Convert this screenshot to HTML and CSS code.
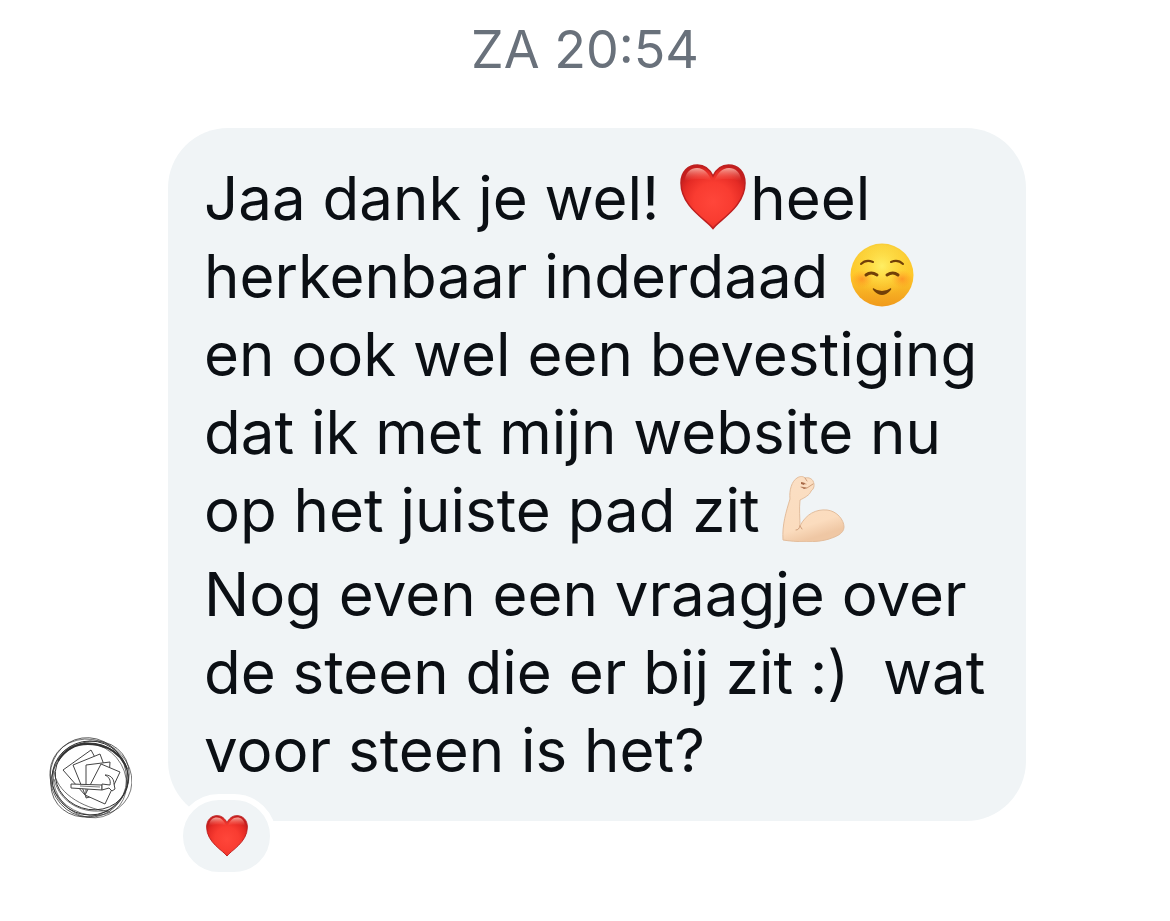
FILE: index.html
```
<!DOCTYPE html>
<html lang="nl">
<head>
    <meta charset="UTF-8">
    <meta name="viewport" content="width=device-width, initial-scale=1.0">
    <title>Chat</title>
    <link rel="stylesheet" href="styles.css">
</head>
<body>
    <svg class="defs" width="0" height="0" aria-hidden="true">
        <defs>
            <radialGradient id="heartFill" cx="0.5" cy="0.58" r="0.6">
                <stop offset="0" stop-color="#ff463a"/>
                <stop offset="0.5" stop-color="#f93c31"/>
                <stop offset="0.8" stop-color="#e52b25"/>
                <stop offset="1" stop-color="#c51d1d"/>
            </radialGradient>
            <linearGradient id="heartShine" x1="0" y1="0" x2="0" y2="1">
                <stop offset="0" stop-color="#ffc1b4" stop-opacity="0.85"/>
                <stop offset="1" stop-color="#ff6a5c" stop-opacity="0"/>
            </linearGradient>
            <linearGradient id="faceFill" x1="0" y1="0" x2="0" y2="1">
                <stop offset="0" stop-color="#f9cf3a"/>
                <stop offset="0.5" stop-color="#ffc82a"/>
                <stop offset="1" stop-color="#f09a1c"/>
            </linearGradient>
            <radialGradient id="faceLight" cx="0.5" cy="0.35" r="0.5">
                <stop offset="0" stop-color="#fff36a" stop-opacity="0.9"/>
                <stop offset="1" stop-color="#ffdd3c" stop-opacity="0"/>
            </radialGradient>
            <radialGradient id="blush">
                <stop offset="0" stop-color="#ff6a1f" stop-opacity="0.5"/>
                <stop offset="1" stop-color="#ff8a20" stop-opacity="0"/>
            </radialGradient>
            <linearGradient id="skin" x1="0" y1="0" x2="0.3" y2="1">
                <stop offset="0" stop-color="#fbdfc4"/>
                <stop offset="0.8" stop-color="#fbdcbe"/>
                <stop offset="1" stop-color="#efc7a4"/>
            </linearGradient>
            <symbol id="heart" viewBox="0 0 66 66">
                <path fill="url(#heartFill)" stroke="#bd2020" stroke-width="1.5" d="M33 64.5C27 56 1 43 1 19C1 8 8 1 17.500 1C25 1 30 6 33 12C36 6 41 1 48.500 1C58 1 65 8 65 19C65 43 39 56 33 64.500Z"/>
                <path fill="url(#heartShine)" d="M5 17C5 8 11 4 17 4C24 4 28 9 32 17C24 14 13 15 5 17Z"/>
                <path fill="url(#heartShine)" d="M61 17C61 8 55 4 49 4C42 4 38 9 34 17C42 14 53 15 61 17Z"/>
            </symbol>
        </defs>
    </svg>

    <main class="chat">
        <time class="timestamp" datetime="20:54">ZA 20:54</time>

        <div class="message">
            <svg class="avatar" viewBox="0 0 84 84" role="img" aria-label="Avatar">
                <g fill="none" stroke="#333">
                    <ellipse cx="42" cy="41" rx="38" ry="37" stroke-width="1"/>
                    <ellipse cx="42" cy="40" rx="42" ry="37" stroke-width="0.600" transform="rotate(28 42 42)"/>
                    <ellipse cx="40" cy="43" rx="40" ry="38" stroke-width="0.700" transform="rotate(70 42 42)"/>
                    <ellipse cx="42" cy="42" rx="41" ry="36" stroke-width="0.700" transform="rotate(-38 42 42)"/>
                    <ellipse cx="43" cy="39" rx="37" ry="33" stroke-width="0.900" transform="rotate(18 42 42)"/>
                    <ellipse cx="43" cy="43" rx="39" ry="35" stroke-width="0.600" transform="rotate(50 42 42)"/>
                    <path stroke-width="2" d="M10 24C19 9 34 5 50 8C64 11 74 19 79 32"/>
                    <path stroke-width="0.700" d="M6 34C8 54 32 71 62 75M6 42C12 66 35 78 60 73"/>
                </g>
                <g fill="#fff" stroke="#444" stroke-width="1" stroke-linejoin="round">
                    <path d="M15 33L43 13L57 39L37 58Z"/>
                    <path d="M25 28L52 17L62 44L38 60Z"/>
                    <path d="M38 28L62 25L60 55L38 61Z"/>
                    <path d="M53 27L72 35L57 67L37 58Z"/>
                    <path d="M23 47L54 48V53L23 51Z"/>
                    <path d="M54 47L62 48C63 43 61 40 57 38C64 38 66 43 66 47L67 52L64 54L61 51L54 53Z"/>
                </g>
                <path d="M32 49L52 50" stroke="#777" stroke-width="1"/>
            </svg>

            <div class="bubble">
                <p>
                    Jaa dank je wel! <svg class="emoji" role="img" aria-label="hart"><use href="#heart"/></svg><span class="after-emoji">heel</span><br>
                    herkenbaar inderdaad
                    <svg class="emoji" viewBox="0 0 66 66" role="img" aria-label="blij gezicht">
                        <circle cx="33" cy="33" r="31.500" fill="url(#faceFill)"/>
                        <circle cx="33" cy="33" r="30" fill="url(#faceLight)"/>
                        <ellipse cx="13" cy="37" rx="11" ry="9" fill="url(#blush)"/>
                        <ellipse cx="53" cy="37" rx="11" ry="9" fill="url(#blush)"/>
                        <g fill="none" stroke="#724008" stroke-linecap="round">
                            <path stroke-width="2" d="M12 22Q17 17 24 20M42 20Q49 17 54 22"/>
                            <path stroke-width="3" d="M17 33Q22 29 28 33M38 33Q44 29 49 33"/>
                        </g>
                        <path fill="#724008" d="M24 46Q33 52 42 46Q43 47 41 49Q33 57 25 49Q23 47 24 46Z"/>
                    </svg><br>
                    en ook wel een bevestiging<br>
                    dat ik met mijn website nu<br>
                    op het juiste pad zit
                    <svg class="emoji" viewBox="0 0 66 66" role="img" aria-label="gespierde arm">
                        <path fill="url(#skin)" stroke="#e3bd9c" stroke-width="1" stroke-linejoin="round" d="M3 64C2 49 6 36 10 23C9 14 12 5 17 2C20 0 23 0 25 2C29 1 32 3 33 5C35 9 34 13 31 15C30 19 24 22 20 24C19 33 20 43 20 50C26 38 36 33 47 34C57 35 64 44 64 51C64 58 55 61 49 63C38 67 15 66 3 64Z"/>
                        <path fill="none" stroke="#cf9e7a" stroke-width="1" stroke-linecap="round" d="M20 50C19 53 18 54 16 54M20 50L22 53M21 11L27 12L33 8M22 7L26 8M25 2L27 5"/>
                        <path fill="#a76847" d="M21 6L25 7L24 9L21 8ZM21 11L27 12L24 13Z"/>
                    </svg>
                </p>
                <p>
                    Nog even een vraagje over<br>
                    de steen die er bij zit :)&nbsp; wat<br>
                    voor steen is het?
                </p>
                <button class="reaction" type="button" aria-label="Reactie: hart">
                    <svg class="reaction-heart" aria-hidden="true"><use href="#heart"/></svg>
                </button>
            </div>
        </div>
    </main>
</body>
</html>
```

FILE: styles.css
```
* {
    box-sizing: border-box;
}
body {
    margin: 0;
    background-color: #fff;
    color: #0b0f14;
    font-family: Inter, "Liberation Sans", sans-serif;
}
.defs {
    position: absolute;
}
.chat {
    display: flex;
    flex-direction: column;
    padding: 18px 144px 100px 48px;
}
.timestamp {
    align-self: center;
    /* centres the label on the window, not on the bubble column */
    margin-left: 96px;
    color: #69717b;
    font-size: 52px;
    line-height: 64px;
}
.message {
    display: flex;
    align-items: flex-end;
    gap: 36px;
    margin-top: 46px;
}
.avatar {
    flex: none;
    width: 84px;
    height: 84px;
}
.bubble {
    position: relative;
    flex: 1;
    padding: 31px 36px 32px;
    border-radius: 60px;
    background-color: #f0f4f6;
    font-size: 60px;
    line-height: 78px;
    white-space: nowrap;
}
.bubble p {
    margin: 0;
}
.bubble p + p {
    margin-top: 6px;
}
.emoji {
    width: 66px;
    height: 66px;
    margin-left: 4px;
    vertical-align: -10px;
}
.after-emoji {
    margin-left: 4px;
}
.reaction {
    position: absolute;
    left: 9px;
    bottom: -57px;
    display: flex;
    align-items: center;
    justify-content: center;
    width: 99px;
    height: 84px;
    padding: 0;
    border: 6px solid #fff;
    border-radius: 42px;
    background-color: #f0f4f6;
    cursor: pointer;
}
.reaction-heart {
    width: 42px;
    height: 42px;
}
```
